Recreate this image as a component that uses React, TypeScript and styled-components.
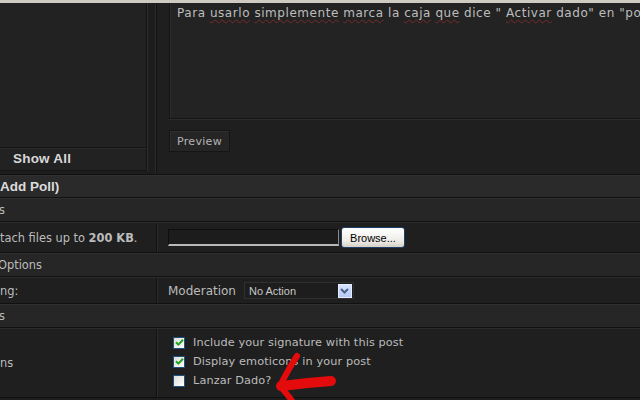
import React from 'react'
import styled, { createGlobalStyle } from 'styled-components'

const GlobalStyle = createGlobalStyle`
  html, body {
    margin: 0;
    padding: 0;
    background: #1d1d1d;
    overflow: hidden;
  }
  body {
    font-family: "DejaVu Sans", Verdana, sans-serif;
    color: #c4c4c4;
  }
`

const Page = styled.div`
  position: relative;
  width: 640px;
  height: 400px;
  overflow: hidden;
  background: #1d1d1d;
  border-top: 3px solid #cfcbc2;
  box-sizing: border-box;
`

const TopSection = styled.div`
  display: grid;
  grid-template-columns: 157px 1fr;
  height: 171px;
  border-bottom: 1px solid #111;
`

const LeftCell = styled.div`
  border-right: 1px solid #121212;
  box-shadow: inset -1px 0 0 #2c2c2c;
  padding-right: 9px;
  display: flex;
`

const SmiliesBox = styled.div`
  flex: 1;
  display: flex;
  flex-direction: column;
  justify-content: flex-end;
  background: #222;
  border-right: 1px solid #141414;
  box-shadow: 1px 0 0 #2e2e2e;
  margin-bottom: 3px;
  border-bottom: 1px solid #151515;
`

const ShowAll = styled.div`
  height: 23px;
  display: flex;
  align-items: center;
  padding-left: 13px;
  padding-bottom: 2px;
  box-sizing: border-box;
  border-top: 1px solid #151515;
  box-shadow: inset 0 1px 0 #2b2b2b;
  font-family: "Liberation Sans", Arial, sans-serif;
  font-weight: bold;
  font-size: 13.5px;
  color: #d8d8d8;
  letter-spacing: 0.2px;
`

const RightCell = styled.div`
  padding-left: 12px;
  display: flex;
  flex-direction: column;
  align-items: flex-start;
  background: #1f1f1f;
`

const TextArea = styled.div`
  width: 100%;
  height: 116px;
  box-sizing: border-box;
  background: #232323;
  border-left: 1px solid #141414;
  border-bottom: 1px solid #141414;
  box-shadow: inset 1px 0 0 #2c2c2c, 0 1px 0 #2c2c2c;
  padding: 3px 0 0 7px;
  font-size: 12px;
  letter-spacing: 0.55px;
  color: #bdbdbd;
  white-space: nowrap;
  overflow: hidden;
`

const Squiggle = styled.span`
  text-decoration: underline wavy #7a2a2a;
  text-decoration-thickness: 1px;
  text-underline-offset: 2px;
`

const PreviewButton = styled.div`
  margin-top: 11px;
  width: 61px;
  height: 22px;
  box-sizing: border-box;
  background: #252525;
  border: 1px solid #151515;
  box-shadow: inset 1px 1px 0 #2f2f2f;
  display: flex;
  align-items: center;
  justify-content: center;
  font-size: 11px;
  color: #b4b4b4;
  letter-spacing: 0.3px;
`

const HeadRow = styled.div`
  height: 21px;
  display: flex;
  align-items: center;
  background: #2a2a2a;
  border-top: 1px solid #303030;
  border-bottom: 1px solid #121212;
  font-family: "Liberation Sans", Arial, sans-serif;
  font-weight: bold;
  font-size: 13.5px;
  color: #dcdcdc;
`

const CatRow = styled.div`
  height: 22px;
  display: flex;
  align-items: center;
  background: #262626;
  border-top: 1px solid #2f2f2f;
  border-bottom: 1px solid #121212;
  font-size: 11.4px;
  color: #bcbcbc;
  overflow: hidden;
  white-space: nowrap;
`

const FieldRow = styled.div<{ $h: number }>`
  display: grid;
  grid-template-columns: 157px 1fr;
  height: ${p => p.$h}px;
  background: #1f1f1f;
  border-top: 1px solid #2b2b2b;
  border-bottom: 1px solid #111;
`

const LabelCell = styled.div`
  display: flex;
  align-items: center;
  border-right: 1px solid #121212;
  font-size: 11.4px;
  color: #bcbcbc;
  white-space: nowrap;
  overflow: hidden;
`

const ValueCell = styled.div<{ $top?: boolean }>`
  display: flex;
  align-items: ${p => (p.$top ? 'flex-start' : 'center')};
  padding-left: 11px;
  box-shadow: inset 1px 0 0 #2b2b2b;
  font-size: 12px;
  color: #bcbcbc;
`

const Clip = styled.span<{ $shift: number }>`
  margin-left: ${p => p.$shift}px;
`

const FileInput = styled.div`
  width: 171px;
  height: 17px;
  margin-right: 2px;
  box-sizing: border-box;
  background: #1c1c1c;
  border-top: 1px solid #0e0e0e;
  border-left: 1px solid #0e0e0e;
  border-bottom: 2px solid #b8b8b8;
  border-right: 1px solid #8a8a8a;
`

const BrowseButton = styled.div`
  width: 64px;
  height: 21px;
  box-sizing: border-box;
  border: 1px solid #1f3f6a;
  border-radius: 3px;
  background: linear-gradient(#ffffff, #ecebe6 70%, #d6d0c5);
  display: flex;
  align-items: center;
  justify-content: center;
  font-family: "Liberation Sans", Arial, sans-serif;
  font-size: 11px;
  color: #000;
`

const ModLabel = styled.span`
  margin-right: 8px;
`

const Select = styled.div`
  width: 110px;
  height: 17px;
  box-sizing: border-box;
  border: 1px solid #303030;
  background: #1d1d1d;
  display: flex;
  align-items: center;
  justify-content: space-between;
  padding: 0 1px 0 4px;
  font-family: "Liberation Sans", Arial, sans-serif;
  font-size: 11px;
  color: #c8c8c8;
`

const DropButton = styled.div`
  width: 14px;
  height: 14px;
  box-sizing: border-box;
  background: linear-gradient(#d6e2fc, #b4c8f6);
  border: 1px solid #e6ecfb;
  display: flex;
  align-items: center;
  justify-content: center;
`

const OptionList = styled.div`
  display: flex;
  flex-direction: column;
  padding-top: 4px;
  padding-left: 5px;
`

const OptionItem = styled.label`
  display: flex;
  align-items: center;
  gap: 8px;
  height: 19px;
  font-size: 11.3px;
  color: #bcbcbc;
  letter-spacing: 0.1px;
`

const Box = styled.span`
  width: 12px;
  height: 12px;
  box-sizing: border-box;
  border: 1px solid #1c5180;
  background: linear-gradient(135deg, #dcdcd7, #ffffff);
  display: inline-flex;
  align-items: center;
  justify-content: center;
`

const Scribble = styled.svg`
  position: absolute;
  left: 270px;
  top: 345px;
  pointer-events: none;
`

function Check({ on }: { on: boolean }) {
  return (
    <Box>
      {on && (
        <svg width="9" height="9" viewBox="0 0 9 9">
          <path d="M1 4.2 L3.4 6.6 L8 1.8" fill="none" stroke="#21a121" strokeWidth="2" />
        </svg>
      )}
    </Box>
  )
}

export default function App() {
  return (
    <>
      <GlobalStyle />
      <Page>
        <TopSection>
          <LeftCell>
            <SmiliesBox>
              <ShowAll>Show All</ShowAll>
            </SmiliesBox>
          </LeftCell>
          <RightCell>
            <TextArea>
              Para <Squiggle>usarlo</Squiggle> <Squiggle>simplemente</Squiggle> <Squiggle>marca</Squiggle> la <Squiggle>caja</Squiggle> <Squiggle>que</Squiggle> dice " <Squiggle>Activar</Squiggle> dado" en "postear"
            </TextArea>
            <PreviewButton>Preview</PreviewButton>
          </RightCell>
        </TopSection>

        <HeadRow><Clip $shift={0}>Add Poll)</Clip></HeadRow>
        <CatRow><Clip $shift={-1}>s</Clip></CatRow>

        <FieldRow $h={29}>
          <LabelCell><Clip $shift={0}>tach files up to <b>200 KB</b>.</Clip></LabelCell>
          <ValueCell>
            <FileInput />
            <BrowseButton>Browse...</BrowseButton>
          </ValueCell>
        </FieldRow>

        <CatRow><Clip $shift={-2}>Options</Clip></CatRow>

        <FieldRow $h={25}>
          <LabelCell><Clip $shift={0}>ng:</Clip></LabelCell>
          <ValueCell>
            <ModLabel>Moderation</ModLabel>
            <Select>
              No Action
              <DropButton>
                <svg width="9" height="6" viewBox="0 0 9 6">
                  <path d="M1 1 L4.5 4.5 L8 1" fill="none" stroke="#4d6185" strokeWidth="2" />
                </svg>
              </DropButton>
            </Select>
          </ValueCell>
        </FieldRow>

        <CatRow><Clip $shift={-1}>s</Clip></CatRow>

        <FieldRow $h={68}>
          <LabelCell><Clip $shift={0}>ns</Clip></LabelCell>
          <ValueCell $top>
            <OptionList>
              <OptionItem><Check on />Include your signature with this post</OptionItem>
              <OptionItem><Check on />Display emoticons in your post</OptionItem>
              <OptionItem><Check on={false} />Lanzar Dado?</OptionItem>
            </OptionList>
          </ValueCell>
        </FieldRow>

        <Scribble width="70" height="56" viewBox="0 0 70 56">
          <path d="M61 33 C48 34 28 36 11 38" fill="none" stroke="#e30b0b" strokeWidth="10" strokeLinecap="round" />
          <path d="M27 8 C21 17 15 28 10 38 C15 44 20 49 24 56" fill="none" stroke="#e30b0b" strokeWidth="6" strokeLinecap="round" strokeLinejoin="round" />
        </Scribble>
      </Page>
    </>
  )
}
